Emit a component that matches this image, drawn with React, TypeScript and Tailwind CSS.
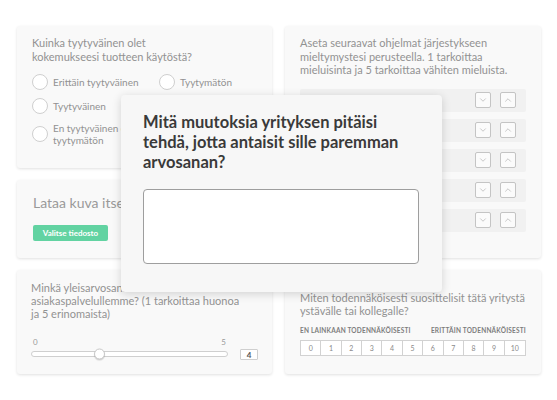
import { ChevronDown, ChevronUp } from "lucide-react";

const card = "bg-[#f9f9f9] rounded-[3px] shadow-[0_1px_3px_rgba(0,0,0,0.12)]";

function Radio({ label }: { label: string }) {
  return (
    <div className="flex items-center gap-[5px]">
      <span className="w-4 h-4 shrink-0 rounded-full border border-[#cfcfcf] bg-white" />
      <span className="leading-[12px]">{label}</span>
    </div>
  );
}

function RankRow() {
  return (
    <div className="h-[23px] bg-[#f1f1f1] rounded-[2px] flex items-center justify-end gap-[9px] pr-[10px]">
      <span className="w-4 h-4 flex items-center justify-center border border-[#c4c4c4] rounded-[2px] bg-[#fbfbfb]">
        <ChevronDown className="w-[10px] h-[10px] text-[#a8a8a8]" strokeWidth={1.5} />
      </span>
      <span className="w-4 h-4 flex items-center justify-center border border-[#c4c4c4] rounded-[2px] bg-[#fbfbfb]">
        <ChevronUp className="w-[10px] h-[10px] text-[#a8a8a8]" strokeWidth={1.5} />
      </span>
    </div>
  );
}

export default function App() {
  return (
    <div className="relative w-[557px] h-[400px] bg-white overflow-hidden font-['Lato',sans-serif] text-[#929292]">
      <div className="flex gap-[13px] pl-[17px] pt-[26px]">
        {/* left column */}
        <div className="w-[255px] flex flex-col gap-3">
          <div className={`${card} h-[142px] pl-[15px] pt-[10px] text-[11px]`}>
            <p className="leading-[14px] whitespace-nowrap">
              Kuinka tyytyväinen olet
              <br />
              kokemukseesi tuotteen käytöstä?
            </p>
            <div className="grid grid-cols-[127px_1fr] gap-y-2 mt-[10px] text-[10px]">
              <Radio label="Erittäin tyytyväinen" />
              <Radio label="Tyytymätön" />
              <Radio label="Tyytyväinen" />
              <div />
              <div className="col-span-2 flex items-center gap-[5px]">
                <span className="w-4 h-4 shrink-0 rounded-full border border-[#cfcfcf] bg-white" />
                <span className="leading-[12px] whitespace-nowrap">
                  En tyytyväinen enkä
                  <br />
                  tyytymätön
                </span>
              </div>
            </div>
          </div>

          <div className={`${card} h-[78px] pl-4 pt-[14px]`}>
            <p className="text-[14px] leading-[18px] text-[#999]">Lataa kuva itsestäsi</p>
            <button className="mt-[13px] w-[75px] h-4 rounded-[2px] bg-[#62d3a2] text-white text-[8px] font-bold">
              Valitse tiedosto
            </button>
          </div>

          <div className={`${card} h-[104px] pl-[14px] pr-3 pt-[11px] text-[11px]`}>
            <p className="leading-[13px] whitespace-nowrap">
              Minkä yleisarvosanan antaisit
              <br />
              asiakaspalvelullemme? (1 tarkoittaa huonoa
              <br />
              ja 5 erinomaista)
            </p>
            <div className="flex items-end gap-3 mt-[17px]">
              <div className="w-[197px]">
                <div className="flex justify-between text-[8px] leading-[10px] text-[#9a9a9a] px-[2px]">
                  <span>0</span>
                  <span>5</span>
                </div>
                <div className="relative mt-[4px] h-[6px] rounded-full border border-[#cfcfcf] bg-white">
                  <span className="absolute left-[62px] top-1/2 -translate-y-1/2 w-[11px] h-[11px] rounded-full bg-white border border-[#c8c8c8] shadow-[0_1px_1px_rgba(0,0,0,0.15)]" />
                </div>
              </div>
              <div className="w-[18px] h-[11px] -mb-[3px] border border-[#cfcfcf] bg-white rounded-[1px] flex items-center justify-center text-[8px] font-bold text-[#555]">
                4
              </div>
            </div>
          </div>
        </div>

        {/* right column */}
        <div className="w-[256px] flex flex-col gap-3">
          <div className={`${card} h-[232px] pl-[15px] pr-[15px] pt-[10px] text-[11px]`}>
            <p className="leading-[13.5px] whitespace-nowrap">
              Aseta seuraavat ohjelmat järjestykseen
              <br />
              mieltymystesi perusteella. 1 tarkoittaa
              <br />
              mieluisinta ja 5 tarkoittaa vähiten mieluista.
            </p>
            <div className="flex flex-col gap-[7px] mt-[12px]">
              <RankRow />
              <RankRow />
              <RankRow />
              <RankRow />
              <RankRow />
            </div>
          </div>

          <div className={`${card} h-[104px] pl-[15px] pr-[15px] pt-[21px] text-[11px]`}>
            <p className="leading-[13px] whitespace-nowrap">
              Miten todennäköisesti suosittelisit tätä yritystä
              <br />
              ystävälle tai kollegalle?
            </p>
            <div className="flex justify-between mt-[10px] text-[6.5px] tracking-[0.2px] font-bold text-[#7d7d7d] leading-[8px] whitespace-nowrap">
              <span>EN LAINKAAN TODENNÄKÖISESTI</span>
              <span>ERITTÄIN TODENNÄKÖISESTI</span>
            </div>
            <div className="mt-[5px] grid grid-cols-11 h-[16px] border border-[#d2d2d2] bg-white divide-x divide-[#d2d2d2]">
              {[0, 1, 2, 3, 4, 5, 6, 7, 8, 9, 10].map((n) => (
                <span key={n} className="flex items-center justify-center text-[7px] text-[#8a8a8a]">
                  {n}
                </span>
              ))}
            </div>
          </div>
        </div>
      </div>

      {/* modal */}
      <div className="absolute left-[121px] top-[95px] w-[321px] h-[197px] bg-[#f7f7f7] rounded-[4px] shadow-[0_2px_10px_rgba(0,0,0,0.16)] pl-[22px] pr-[22px] pt-[17px]">
        <h2 className="text-[16.5px] leading-[20px] font-bold text-[#3a3a3a] whitespace-nowrap">
          Mitä muutoksia yrityksen pitäisi
          <br />
          tehdä, jotta antaisit sille paremman
          <br />
          arvosanan?
        </h2>
        <div className="mt-[17px] w-[276px] h-[75px] bg-white border-[1.5px] border-[#9e9e9e] rounded-[4px]" />
      </div>
    </div>
  );
}
